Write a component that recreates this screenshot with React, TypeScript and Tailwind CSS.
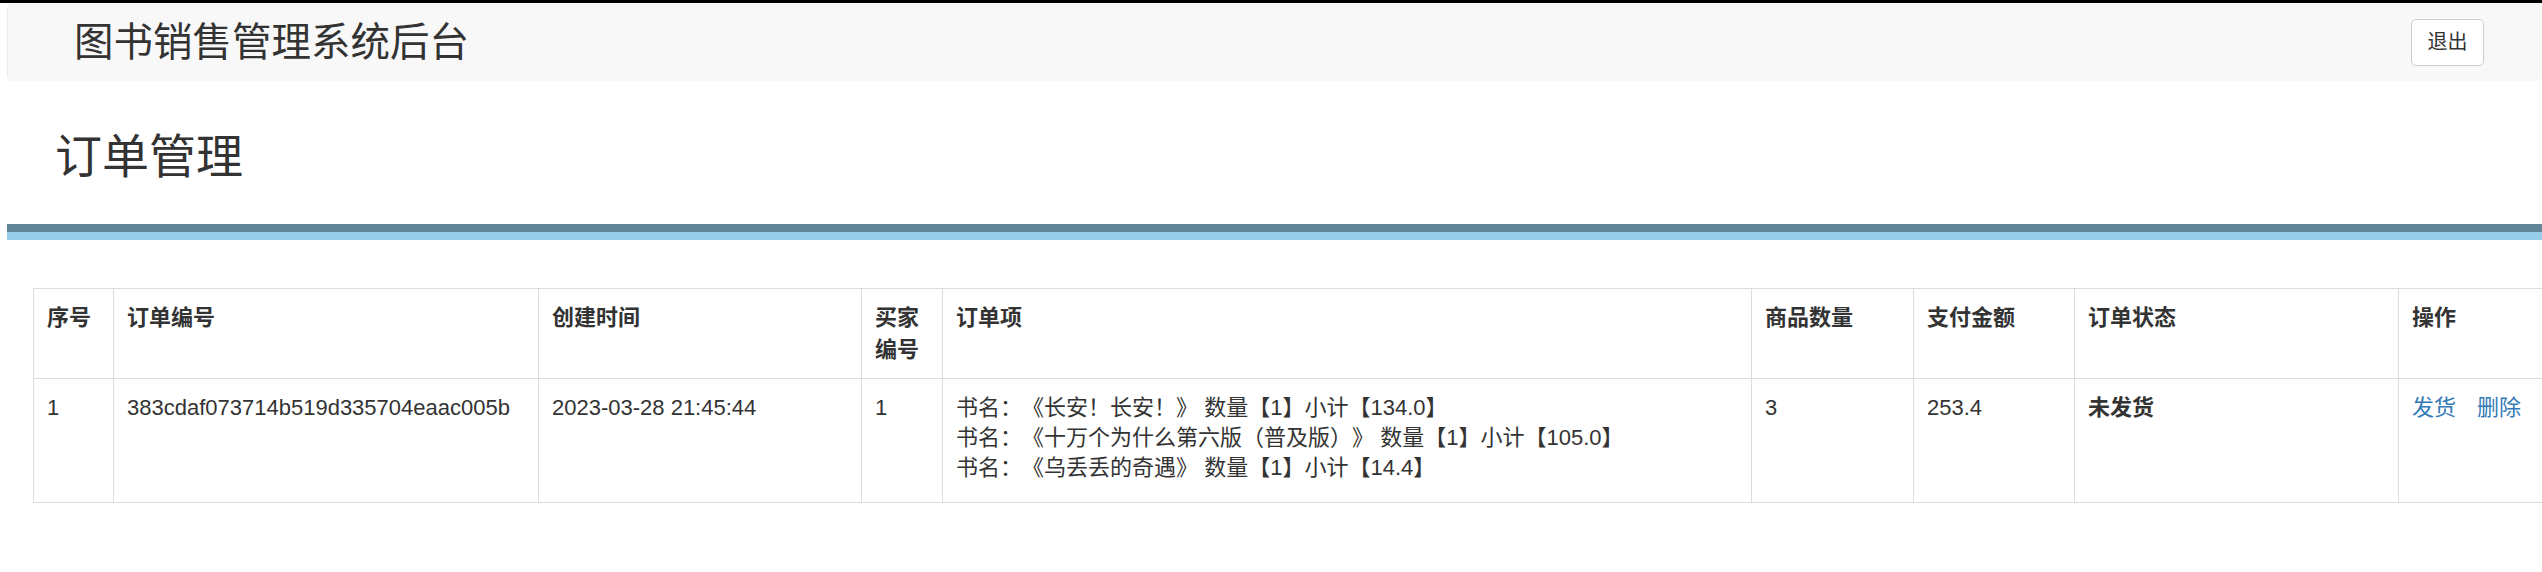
import React from 'react';

type TOrderItem = {
    name: string
    count: number
    price: string
}

type TOrder = {
    index: number
    id: string
    createTime: string
    buyerId: number
    items: TOrderItem[]
    total: number
    amount: string
    status: string
}

const orders: TOrder[] = [
    {
        index: 1,
        id: "383cdaf073714b519d335704eaac005b",
        createTime: "2023-03-28 21:45:44",
        buyerId: 1,
        items: [
            { name: "长安！长安！", count: 1, price: "134.0" },
            { name: "十万个为什么第六版（普及版）", count: 1, price: "105.0" },
            { name: "乌丢丢的奇遇", count: 1, price: "14.4" },
        ],
        total: 3,
        amount: "253.4",
        status: "未发货"
    }
]

const headers = ["序号", "订单编号", "创建时间", "买家编号", "订单项", "商品数量", "支付金额", "订单状态", "操作"];

export default function App() {

    return (
        <div className="min-h-screen bg-white text-[#333] [text-spacing-trim:space-all] font-['Liberation_Sans','Noto_Sans_CJK_SC',sans-serif]">
            <div className="h-[3px] bg-black" />

            {/* navbar */}
            <div className="ml-[7px] h-[78px] flex items-center justify-between bg-[#f8f8f8] border-l border-[#ececec] rounded-b-[5px] rounded-tl-[6px]">
                <span className="pl-[66px] text-[39.5px] leading-[44px]">图书销售管理系统后台</span>
                <button className="mr-[58px] w-[73px] h-[47px] flex items-center justify-center bg-white border border-[#ccc] rounded-[5px] text-[20px] text-[#333]">
                    退出
                </button>
            </div>

            <div className="pt-[50px]">
                <h1 className="pl-[55px] text-[47px] leading-[52px] font-normal">订单管理</h1>
            </div>

            {/* stripes */}
            <div className="mt-[41px] ml-[7px]">
                <div className="h-[8px] bg-[#628498]" />
                <div className="h-[8px] bg-[#98cde9]" />
            </div>

            <div className="mt-[48px] pl-[33px] overflow-hidden">
                <table className="table-fixed border-collapse w-[2510px] text-[22px]">
                    <colgroup>
                        <col className="w-[80px]" />
                        <col className="w-[425px]" />
                        <col className="w-[323px]" />
                        <col className="w-[81px]" />
                        <col className="w-[809px]" />
                        <col className="w-[162px]" />
                        <col className="w-[161px]" />
                        <col className="w-[324px]" />
                        <col className="w-[145px]" />
                    </colgroup>
                    <thead>
                        <tr>
                            {headers.map(header => (
                                <th
                                    key={header}
                                    className="border border-[#ddd] px-[13px] pt-[13px] pb-[13px] text-left align-top font-bold leading-[31.5px]"
                                >
                                    {header}
                                </th>
                            ))}
                        </tr>
                    </thead>
                    <tbody>
                        {orders.map(order => (
                            <tr key={order.id} className="leading-[30px]">
                                <td className="border border-[#ddd] px-[13px] pt-[14px] pb-[19px] align-top">{order.index}</td>
                                <td className="border border-[#ddd] px-[13px] pt-[14px] pb-[19px] align-top">{order.id}</td>
                                <td className="border border-[#ddd] px-[13px] pt-[14px] pb-[19px] align-top">{order.createTime}</td>
                                <td className="border border-[#ddd] px-[13px] pt-[14px] pb-[19px] align-top">{order.buyerId}</td>
                                <td className="border border-[#ddd] px-[13px] pt-[14px] pb-[19px] align-top">
                                    {order.items.map(item => (
                                        <div key={item.name}>
                                            书名：《{item.name}》 数量【{item.count}】小计【{item.price}】
                                        </div>
                                    ))}
                                </td>
                                <td className="border border-[#ddd] px-[13px] pt-[14px] pb-[19px] align-top">{order.total}</td>
                                <td className="border border-[#ddd] px-[13px] pt-[14px] pb-[19px] align-top">{order.amount}</td>
                                <td className="border border-[#ddd] px-[13px] pt-[14px] pb-[19px] align-top font-bold">{order.status}</td>
                                <td className="border border-[#ddd] px-[13px] pt-[14px] pb-[19px] align-top whitespace-nowrap">
                                    <a href="#" className="text-[#337ab7] mr-[21px]">发货</a>
                                    <a href="#" className="text-[#337ab7]">删除</a>
                                </td>
                            </tr>
                        ))}
                    </tbody>
                </table>
            </div>
        </div>
    )
}
